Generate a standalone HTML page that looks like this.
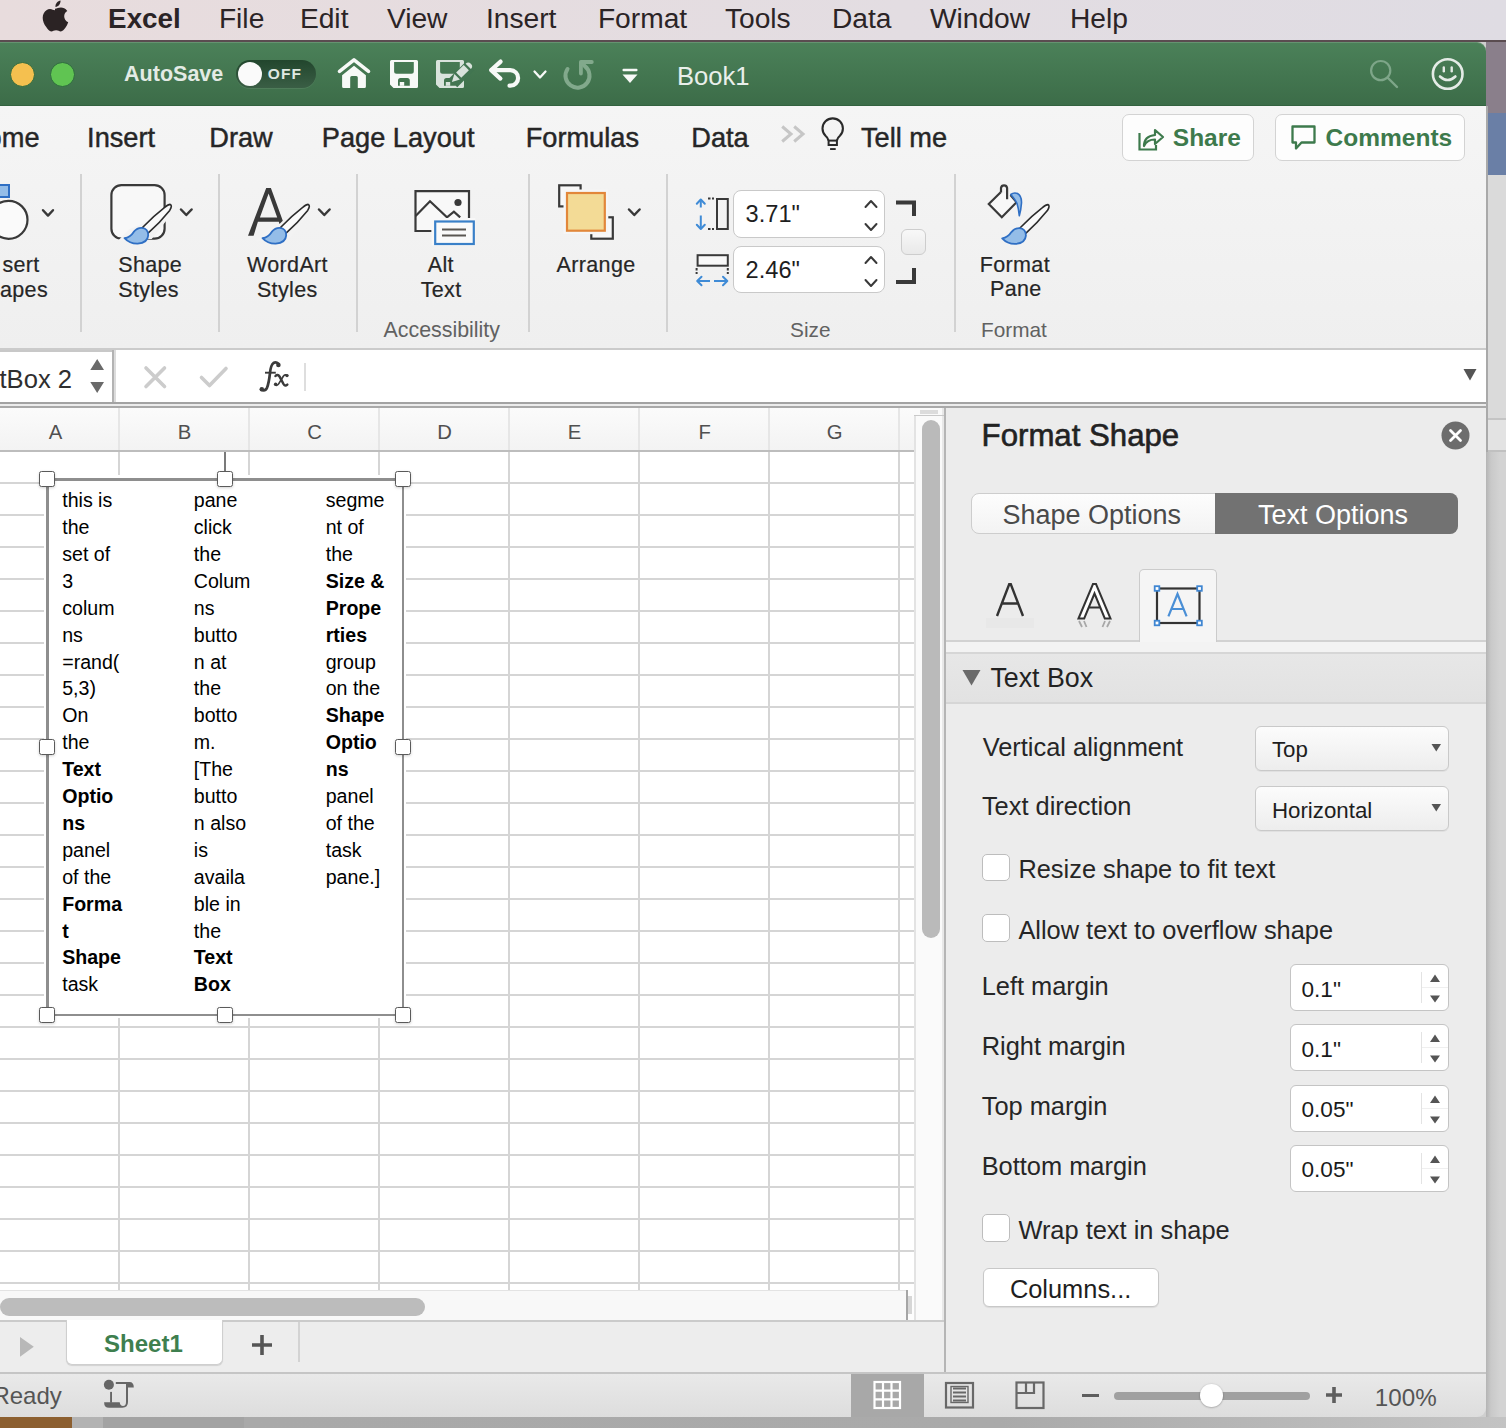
<!DOCTYPE html><html><head><meta charset="utf-8"><style>
html,body{margin:0;padding:0}
body{width:1506px;height:1428px;overflow:hidden;position:relative;background:#cfcfcf;font-family:"Liberation Sans",sans-serif}
.t{position:absolute;line-height:1;white-space:nowrap}
.r{position:absolute;box-sizing:border-box}
</style></head><body>

<div class="r" style="left:1486px;top:40px;width:20px;height:73px;background:#8a7f8b"></div>
<div class="r" style="left:1486px;top:113px;width:20px;height:62px;background:#6a7fa6"></div>
<div class="r" style="left:1486px;top:175px;width:20px;height:243px;background:#dadada"></div>
<div class="r" style="left:1486px;top:418px;width:20px;height:1.5px;background:#c4c4c4"></div>
<div class="r" style="left:1486px;top:419.5px;width:20px;height:30.5px;background:#e3e3e3"></div>
<div class="r" style="left:1486px;top:450px;width:20px;height:1.5px;background:#c0c0c0"></div>
<div class="r" style="left:1486px;top:451.5px;width:20px;height:976.5px;background:linear-gradient(90deg,#b4b4b4,#c9c9c9 5px,#d3d3d3 14px)"></div>
<div class="r" style="left:1486px;top:106px;width:1.5px;height:345.5px;background:#a9a9a9"></div>
<div class="r" style="left:0px;top:1417px;width:72px;height:11px;background:#8c5f30"></div>
<div class="r" style="left:72px;top:1417px;width:31px;height:11px;background:#b3b3b3"></div>
<div class="r" style="left:103px;top:1417px;width:141px;height:11px;background:#a3a3a3"></div>
<div class="r" style="left:244px;top:1417px;width:1262px;height:11px;background:linear-gradient(90deg,#a9a9a9,#aaaaaa 60%,#c3c3c3)"></div>
<div class="r" style="left:0px;top:0px;width:1506px;height:40px;background:linear-gradient(90deg,#e8dcdd,#e3dde2 60%,#dfdce3)"></div>
<div class="r" style="left:0px;top:40px;width:1506px;height:2px;background:#5a4c50"></div>
<svg class="r" style="left:42px;top:0px" width="27" height="32" viewBox="0 0 27 32"><path fill="#2b2324" d="M18.5 0.5c0.3 3-1.8 6.2-5 6.6-0.4-3.1 2-6.1 5-6.6z M13 8.8c2 0 3.3-1.2 6-1.2 1.9 0 4.6 0.9 6.3 3.4-4.6 2.6-3.9 9.4 0.9 11.2-0.7 2.1-1.6 3.8-2.8 5.6-1.3 1.8-2.8 3.6-4.6 3.6-1.9 0-2.4-1.1-4.7-1.1-2.4 0-3 1.1-4.8 1.1-2.1 0-3.6-2.3-4.9-4.2C0.6 22.6-0.3 16.9 1.8 13.2 3.2 10.7 5.4 9 8 9c2.2 0 3.3 1.3 5 1.3" /></svg>
<div class="t" style="left:108.1px;top:4.7px;font-size:27.8px;color:#2b2426;font-weight:bold;">Excel</div>
<div class="t" style="left:218.9px;top:4.3px;font-size:28.2px;color:#2b2426;">File</div>
<div class="t" style="left:299.9px;top:4.3px;font-size:28.2px;color:#2b2426;">Edit</div>
<div class="t" style="left:386.9px;top:4.3px;font-size:28.2px;color:#2b2426;">View</div>
<div class="t" style="left:485.9px;top:4.3px;font-size:28.2px;color:#2b2426;">Insert</div>
<div class="t" style="left:597.9px;top:4.3px;font-size:28.2px;color:#2b2426;">Format</div>
<div class="t" style="left:724.9px;top:4.3px;font-size:28.2px;color:#2b2426;">Tools</div>
<div class="t" style="left:831.9px;top:4.3px;font-size:28.2px;color:#2b2426;">Data</div>
<div class="t" style="left:929.9px;top:4.3px;font-size:28.2px;color:#2b2426;">Window</div>
<div class="t" style="left:1069.9px;top:4.3px;font-size:28.2px;color:#2b2426;">Help</div>
<div class="r" style="left:0px;top:42px;width:1486px;height:64px;background:linear-gradient(#4b8159,#3c6c48);border-top-right-radius:9px;box-shadow:inset 0 1px 0 rgba(255,255,255,0.15), inset 0 -1px 0 #33623f"></div>
<div class="r" style="left:9.5px;top:61.5px;width:25.0px;height:25.0px;background:#f5c04f;border-radius:50%;border:1.5px solid #2f6a3f"></div>
<div class="r" style="left:49.5px;top:61.5px;width:25.0px;height:25.0px;background:#60c452;border-radius:50%;border:1.5px solid #2f6a3f"></div>
<div class="t" style="left:124.1px;top:64.2px;font-size:21.5px;color:#e3ebe5;font-weight:bold;">AutoSave</div>
<div class="r" style="left:236px;top:60px;width:80px;height:28px;background:linear-gradient(#22462d,#3a5e45);border-radius:14px;box-shadow:0 1px 0 rgba(255,255,255,0.08)"></div>
<div class="r" style="left:238px;top:62px;width:24px;height:24px;background:#fafafa;border-radius:50%"></div>
<div class="t" style="left:267.7px;top:65.7px;font-size:15.5px;color:#dfe8e1;font-weight:bold;letter-spacing:1.2px">OFF</div>
<svg class="r" style="left:334px;top:54px" width="40" height="40" viewBox="0 0 40 40"><path d="M5.5 17.3 L20 5.9 L34.5 17.3" fill="none" stroke="#f7f9f7" stroke-width="3.6" stroke-linecap="round" stroke-linejoin="round"/><path d="M8.1 21.3 L20 11.8 L31.9 21.3 V32.4 Q31.9 33.9 30.4 33.9 H23.8 V23.6 Q23.8 22.1 22.3 22.1 H17.7 Q16.2 22.1 16.2 23.6 V33.9 H9.6 Q8.1 33.9 8.1 32.4 Z" fill="#f7f9f7"/></svg>
<svg class="r" style="left:384px;top:54px" width="40" height="40" viewBox="0 0 40 40"><path fill="#f7f9f7" fill-rule="evenodd" d="M7.5 6 H32.5 Q34 6 34 7.5 V32.5 Q34 34 32.5 34 H9.5 L6 30.5 V7.5 Q6 6 7.5 6 Z M10.1 8.1 V17.2 Q10.1 19.7 12.6 19.7 H27.3 Q29.8 19.7 29.8 17.2 V8.1 Z M14 31.8 V26.6 Q14 24.1 16.5 24.1 H23.3 Q25.8 24.1 25.8 26.6 V31.8 Z"/><rect x="15.8" y="28" width="4.4" height="3.8" fill="#f7f9f7"/></svg>
<svg class="r" style="left:430px;top:54px" width="46" height="40" viewBox="0 0 46 40"><path fill="#d9e3dc" fill-rule="evenodd" d="M7.5 6 H32.5 Q34 6 34 7.5 V32.5 Q34 34 32.5 34 H9.5 L6 30.5 V7.5 Q6 6 7.5 6 Z M10.1 8.1 V17.2 Q10.1 19.7 12.6 19.7 H27.3 Q29.8 19.7 29.8 17.2 V8.1 Z M14 31.8 V26.6 Q14 24.1 16.5 24.1 H23.3 Q25.8 24.1 25.8 26.6 V31.8 Z"/><rect x="15.8" y="28" width="4.4" height="3.8" fill="#d9e3dc"/><path d="M23 29 L40 12" stroke="#427551" stroke-width="12" stroke-linecap="butt"/><path d="M28.7 21.2 L36.3 13.6" stroke="#d9e3dc" stroke-width="7.3"/><path d="M24.4 19.9 L29.9 25.6 L21.9 27.9 Z" fill="#d9e3dc"/><path d="M35.6 9.8 A3.7 3.7 0 0 1 40.9 15 Z" fill="#d9e3dc"/></svg>
<svg class="r" style="left:484px;top:54px" width="40" height="40" viewBox="0 0 40 40"><path d="M16.6 7.6 L7.2 16.1 L16.4 24.6" fill="none" stroke="#f7f9f7" stroke-width="4.2" stroke-linecap="round" stroke-linejoin="round"/><path d="M7.5 16.1 H26.3 A7.8 7.8 0 0 1 26.3 31.7 H25.5" fill="none" stroke="#f7f9f7" stroke-width="4.2" stroke-linecap="round"/></svg>
<svg class="r" style="left:532px;top:68px" width="16" height="14" viewBox="0 0 16 14"><path d="M2.5 3.5 L8 9.5 L13.5 3.5" fill="none" stroke="#f7f9f7" stroke-width="2.3" stroke-linecap="round" stroke-linejoin="round"/></svg>
<svg class="r" style="left:555px;top:52px" width="50" height="44" viewBox="0 0 50 44"><path d="M12.5 17 A12 12 0 1 0 29.8 14.1 L26.5 10.5" fill="none" stroke="#82a98c" stroke-width="4" stroke-linecap="round" stroke-linejoin="round"/><path d="M25.9 21.5 V10 H36.8" fill="none" stroke="#82a98c" stroke-width="3.8" stroke-linecap="round" stroke-linejoin="round"/></svg>
<svg class="r" style="left:621px;top:67px" width="18" height="18" viewBox="0 0 18 18"><rect x="1.5" y="1.8" width="15" height="2.4" fill="#f7f9f7" rx="1"/><path d="M1.5 7.5 H16.5 L9 16 Z" fill="#f7f9f7"/></svg>
<div class="t" style="left:677.0px;top:63.9px;font-size:25.6px;color:#e9efea;">Book1</div>
<svg class="r" style="left:1366px;top:56px" width="36" height="36" viewBox="0 0 36 36"><circle cx="14.7" cy="14.6" r="9.6" fill="none" stroke="#7ea689" stroke-width="2.2"/><path d="M21.5 21.5 L31 31" stroke="#7ea689" stroke-width="2.4" stroke-linecap="round"/></svg>
<svg class="r" style="left:1428px;top:54px" width="40" height="40" viewBox="0 0 40 40"><circle cx="19.7" cy="20" r="14.8" fill="none" stroke="#e4ebe6" stroke-width="2.6"/><rect x="14.6" y="12.2" width="2.4" height="6.2" rx="1.2" fill="#e4ebe6"/><rect x="22.5" y="12.2" width="2.4" height="6.2" rx="1.2" fill="#e4ebe6"/><path d="M12 22.5 Q19.7 29.5 27.4 22.5" fill="none" stroke="#e4ebe6" stroke-width="2.6" stroke-linecap="round"/></svg>
<div class="r" style="left:0px;top:106px;width:1486px;height:242px;background:linear-gradient(#f5f5f5,#efefef)"></div>
<div class="r" style="left:0px;top:348px;width:1486px;height:2px;background:#cbcbcb"></div>
<div class="t" style="left:-13.4px;top:123.6px;font-size:27.2px;color:#262626;-webkit-text-stroke:0.45px #262626">ome</div>
<div class="t" style="left:87.1px;top:123.6px;font-size:27.2px;color:#262626;-webkit-text-stroke:0.45px #262626">Insert</div>
<div class="t" style="left:209.3px;top:123.6px;font-size:27.2px;color:#262626;-webkit-text-stroke:0.45px #262626">Draw</div>
<div class="t" style="left:321.8px;top:123.6px;font-size:27.2px;color:#262626;-webkit-text-stroke:0.45px #262626">Page Layout</div>
<div class="t" style="left:525.7px;top:123.6px;font-size:27.2px;color:#262626;-webkit-text-stroke:0.45px #262626">Formulas</div>
<div class="t" style="left:691.3px;top:123.6px;font-size:27.2px;color:#262626;-webkit-text-stroke:0.45px #262626">Data</div>
<div class="t" style="left:861.0px;top:123.6px;font-size:27.2px;color:#262626;-webkit-text-stroke:0.45px #262626">Tell me</div>
<svg class="r" style="left:779px;top:124px" width="28" height="22" viewBox="0 0 28 22"><path d="M3.2 2.5 L12 10 L3.2 17.5 M15.2 2.5 L24 10 L15.2 17.5" fill="none" stroke="#c6c6c6" stroke-width="3"/></svg>
<svg class="r" style="left:819px;top:117px" width="28" height="36" viewBox="0 0 28 36"><path d="M9.5 23.5 Q9 20.8 6.5 18.8 A10.2 10.2 0 1 1 20.9 18.8 Q18.4 20.8 17.9 23.5" fill="none" stroke="#2a2a2a" stroke-width="2.1"/><rect x="9.6" y="23.6" width="8.3" height="4.4" fill="none" stroke="#2a2a2a" stroke-width="2"/><rect x="11.1" y="31.1" width="5.6" height="1.9" fill="#2a2a2a"/></svg>
<div class="r" style="left:1121.5px;top:114.2px;width:132.20000000000005px;height:47.2px;background:#fdfdfd;border:1.5px solid #d3d3d3;border-radius:7px"></div>
<div class="r" style="left:1274.7px;top:114.2px;width:190.5999999999999px;height:47.2px;background:#fdfdfd;border:1.5px solid #d3d3d3;border-radius:7px"></div>
<svg class="r" style="left:1136px;top:124px" width="30" height="28" viewBox="0 0 30 28"><path d="M3.5 9 V25.5 H20 V21" fill="none" stroke="#3d7a4c" stroke-width="2.2"/><path d="M8 22 Q8 12 19 11 V6 L27 13 L19 20 V15.5 Q11 15.5 8 22 Z" fill="none" stroke="#3d7a4c" stroke-width="2.2" stroke-linejoin="round"/></svg>
<svg class="r" style="left:1290px;top:124px" width="30" height="28" viewBox="0 0 30 28"><path d="M2.5 2.5 H24.5 V18.5 H11.5 L6 24.5 V18.5 H2.5 Z" fill="none" stroke="#3d7a4c" stroke-width="2.3" stroke-linejoin="round"/></svg>
<div class="t" style="left:1172.8px;top:125.5px;font-size:24.5px;color:#3d7a4c;font-weight:bold;">Share</div>
<div class="t" style="left:1325.6px;top:125.5px;font-size:24.5px;color:#3d7a4c;font-weight:bold;">Comments</div>
<div class="r" style="left:80px;top:174px;width:2px;height:158px;background:#d2d2d2"></div>
<div class="r" style="left:218px;top:174px;width:2px;height:158px;background:#d2d2d2"></div>
<div class="r" style="left:356px;top:174px;width:2px;height:158px;background:#d2d2d2"></div>
<div class="r" style="left:528px;top:174px;width:2px;height:158px;background:#d2d2d2"></div>
<div class="r" style="left:666px;top:174px;width:2px;height:158px;background:#d2d2d2"></div>
<div class="r" style="left:954px;top:174px;width:2px;height:158px;background:#d2d2d2"></div>
<svg class="r" style="left:0px;top:180px" width="60" height="62" viewBox="0 0 60 62"><rect x="-4" y="5" width="13" height="12" fill="#94bde8" stroke="#2f6fc4" stroke-width="2"/><circle cx="8.5" cy="39.8" r="19" fill="#fafafa" stroke="#393939" stroke-width="2.2"/><path d="M43 30.2 L48 35.6 L53 30.2" fill="none" stroke="#393939" stroke-width="2.4" stroke-linecap="round" stroke-linejoin="round"/></svg>
<div class="t" style="left:2.4px;top:255.4px;font-size:21.5px;color:#262626;letter-spacing:0.35px;-webkit-text-stroke:0.2px #262626">sert</div>
<div class="t" style="left:0.0px;top:280.0px;font-size:21.5px;color:#262626;letter-spacing:0.35px;-webkit-text-stroke:0.2px #262626">apes</div>
<svg class="r" style="left:100px;top:175px" width="100" height="75" viewBox="0 0 100 75"><rect x="11.4" y="10.1" width="53.2" height="53.6" rx="10" fill="#f8f8f8" stroke="#393939" stroke-width="2.2"/><path transform="translate(69.7,29.9)" d="M2 -3 L6 4 L-18 34 L-52 36 L-40 24 L-25 18 Z" fill="#f3f3f3"/><g transform="translate(69.7,29.9)"><path d="M0.5 -0.5 Q3 0.5 0 5.5 Q-10 18 -21.9 28.5 L-27.2 22.6 Q-16 11 -5 2.5 Q-1.5 -0.5 0.5 -0.5 Z" fill="#fafafa" stroke="#2b2b2b" stroke-width="1.6" stroke-linejoin="round"/><path d="M-45.2 33.3 Q-39.5 32.5 -36 27 Q-32.5 22.8 -28 23 Q-21.5 23.5 -21.5 30.5 Q-22 38 -32 38.8 Q-40 39 -45.2 33.3 Z" fill="#94bde8" stroke="#2f6fc4" stroke-width="1.8" stroke-linejoin="round"/></g><path d="M81 34.5 L86.3 40 L91.6 34.5" fill="none" stroke="#393939" stroke-width="2.5" stroke-linecap="round" stroke-linejoin="round"/></svg>
<div class="t" style="left:118.2px;top:255.4px;font-size:21.5px;color:#262626;letter-spacing:0.35px;-webkit-text-stroke:0.2px #262626">Shape</div>
<div class="t" style="left:118.2px;top:280.0px;font-size:21.5px;color:#262626;letter-spacing:0.35px;-webkit-text-stroke:0.2px #262626">Styles</div>
<svg class="r" style="left:240px;top:175px" width="100" height="75" viewBox="0 0 100 75"><path fill-rule="evenodd" fill="#393939" d="M8 60.8 L26.2 12.9 H30.9 L42.8 45.8 L39.5 49 L38.8 46.8 H17.9 L13.6 60.8 Z M19.9 42.5 H37.2 L28.6 18.6 Z"/><path transform="translate(67.7,29.9)" d="M2 -3 L6 4 L-18 34 L-52 36 L-40 24 L-25 18 Z" fill="#f3f3f3"/><g transform="translate(67.7,29.9)"><path d="M0.5 -0.5 Q3 0.5 0 5.5 Q-10 18 -21.9 28.5 L-27.2 22.6 Q-16 11 -5 2.5 Q-1.5 -0.5 0.5 -0.5 Z" fill="#fafafa" stroke="#2b2b2b" stroke-width="1.6" stroke-linejoin="round"/><path d="M-45.2 33.3 Q-39.5 32.5 -36 27 Q-32.5 22.8 -28 23 Q-21.5 23.5 -21.5 30.5 Q-22 38 -32 38.8 Q-40 39 -45.2 33.3 Z" fill="#94bde8" stroke="#2f6fc4" stroke-width="1.8" stroke-linejoin="round"/></g><path d="M79 34.5 L84.3 40 L89.6 34.5" fill="none" stroke="#393939" stroke-width="2.5" stroke-linecap="round" stroke-linejoin="round"/></svg>
<div class="t" style="left:247.0px;top:255.4px;font-size:21.5px;color:#262626;letter-spacing:0.35px;-webkit-text-stroke:0.2px #262626">WordArt</div>
<div class="t" style="left:256.9px;top:280.0px;font-size:21.5px;color:#262626;letter-spacing:0.35px;-webkit-text-stroke:0.2px #262626">Styles</div>
<svg class="r" style="left:410px;top:186px" width="68" height="62" viewBox="0 0 68 62"><path d="M21.5 45 H5.5 V5.2 H59 V32" fill="#f8f8f8" stroke="#393939" stroke-width="2.2"/><path d="M5.6 30.1 L20 15.3 L37 31.4 L43.9 25.6 L50.2 31.4" fill="none" stroke="#393939" stroke-width="2.2"/><circle cx="48" cy="16.5" r="3.6" fill="#393939"/><rect x="24.2" y="34.5" width="38.6" height="22.5" fill="#f8f8f8" stroke="#f8f8f8" stroke-width="5"/><rect x="25.2" y="35.5" width="38.6" height="22.5" fill="#fafafa" stroke="#3a80c8" stroke-width="2.2"/><path d="M32 43.5 H56 M32 49.5 H56" stroke="#5a5752" stroke-width="1.8"/></svg>
<div class="t" style="left:427.7px;top:255.4px;font-size:21.5px;color:#262626;letter-spacing:0.35px;-webkit-text-stroke:0.2px #262626">Alt</div>
<div class="t" style="left:420.7px;top:280.0px;font-size:21.5px;color:#262626;letter-spacing:0.35px;-webkit-text-stroke:0.2px #262626">Text</div>
<svg class="r" style="left:550px;top:178px" width="100" height="70" viewBox="0 0 100 70"><rect x="9.2" y="7.3" width="21.4" height="21.1" fill="#f8f8f8" stroke="#393939" stroke-width="2.2"/><rect x="41.3" y="39.3" width="21.5" height="21.4" fill="#f8f8f8" stroke="#393939" stroke-width="2.2"/><rect x="13.5" y="11.5" width="44.8" height="44.7" fill="#f6f6f6"/><rect x="17" y="15" width="37.8" height="37.7" fill="#f3db96" stroke="#e2873a" stroke-width="2.2"/><path d="M79 31.5 L84.3 37 L89.6 31.5" fill="none" stroke="#393939" stroke-width="2.5" stroke-linecap="round" stroke-linejoin="round"/></svg>
<div class="t" style="left:556.6px;top:255.4px;font-size:21.5px;color:#262626;letter-spacing:0.35px;-webkit-text-stroke:0.2px #262626">Arrange</div>
<div class="t" style="left:383.5px;top:319.8px;font-size:21.4px;color:#616161;">Accessibility</div>
<div class="t" style="left:790.1px;top:320.3px;font-size:20.8px;color:#616161;">Size</div>
<div class="t" style="left:981.0px;top:320.3px;font-size:20.8px;color:#616161;">Format</div>
<svg class="r" style="left:692px;top:194px" width="40" height="40" viewBox="0 0 40 40"><path d="M8.8 5.8 V13.5 M8.8 21.5 V34.7" stroke="#3f8bd6" stroke-width="2"/><path d="M4.8 9.8 L8.8 5.5 L12.8 9.8 M4.8 30.7 L8.8 35 L12.8 30.7" fill="none" stroke="#3f8bd6" stroke-width="2" stroke-linecap="round" stroke-linejoin="round"/><rect x="25" y="5" width="10.8" height="30" fill="none" stroke="#393939" stroke-width="2"/><path d="M16 4.6 H22 M16 35 H22" stroke="#393939" stroke-width="2" stroke-dasharray="2.5 1.5"/></svg>
<svg class="r" style="left:692px;top:250px" width="40" height="40" viewBox="0 0 40 40"><rect x="5.6" y="5.2" width="30.2" height="10.5" fill="#f8f8f8" stroke="#393939" stroke-width="2"/><path d="M4.6 18 V24 M35.8 18 V24" stroke="#393939" stroke-width="2" stroke-dasharray="2.5 1.5"/><path d="M5.5 31 H18 M22 31 H35" stroke="#3f8bd6" stroke-width="2"/><path d="M9.5 26.8 L5.2 31 L9.5 35.2 M31 26.8 L35.3 31 L31 35.2" fill="none" stroke="#3f8bd6" stroke-width="2" stroke-linecap="round" stroke-linejoin="round"/></svg>
<div class="r" style="left:732.6px;top:190.2px;width:152.69999999999993px;height:47.60000000000002px;background:#fff;border:1.5px solid #c9c9c9;border-radius:8px"></div>
<div class="r" style="left:732.6px;top:246.4px;width:152.69999999999993px;height:47.099999999999994px;background:#fff;border:1.5px solid #c9c9c9;border-radius:8px"></div>
<div class="t" style="left:745.6px;top:203.4px;font-size:23.6px;color:#1e1e1e;">3.71"</div>
<div class="t" style="left:745.6px;top:259.2px;font-size:23.6px;color:#1e1e1e;">2.46"</div>
<svg class="r" style="left:862px;top:194px" width="18" height="42" viewBox="0 0 18 42"><path d="M3.5 13 L9 7 L14.5 13 M3.5 30 L9 36 L14.5 30" fill="none" stroke="#393939" stroke-width="2" stroke-linecap="round" stroke-linejoin="round"/></svg>
<svg class="r" style="left:862px;top:250px" width="18" height="42" viewBox="0 0 18 42"><path d="M3.5 13 L9 7 L14.5 13 M3.5 30 L9 36 L14.5 30" fill="none" stroke="#393939" stroke-width="2" stroke-linecap="round" stroke-linejoin="round"/></svg>
<svg class="r" style="left:893px;top:197px" width="28" height="92" viewBox="0 0 28 92"><path d="M3 5.5 H21 V19" fill="none" stroke="#393939" stroke-width="4"/><path d="M3 85 H21 V71" fill="none" stroke="#393939" stroke-width="4"/></svg>
<div class="r" style="left:901.4px;top:229px;width:25.100000000000023px;height:26px;background:linear-gradient(#f8f8f8,#e9e9e9);border:1px solid #cdcdcd;border-radius:6px"></div>
<svg class="r" style="left:980px;top:178px" width="80" height="72" viewBox="0 0 80 72"><path d="M20.7 14.3 L8.8 26 L21.8 39.3 L36.6 24.2 L30.5 17" fill="#f8f8f8" stroke="#393939" stroke-width="2.2" stroke-linejoin="miter"/><path d="M21 14.5 V10 A3.1 3.1 0 0 1 27.1 10 V21.2" fill="none" stroke="#393939" stroke-width="2.2"/><path d="M30.8 16.5 Q34 14 37.5 15.5 Q41.8 18 41.5 25 Q41 32 39.3 37.7 Q38.5 30 37 25.5 Q35.5 22 30.8 16.5 Z" fill="#94bde8" stroke="#2f6fc4" stroke-width="1.6" stroke-linejoin="round"/><g transform="translate(67.4,27.1)"><path d="M0.5 -0.5 Q3 0.5 0 5.5 Q-10 18 -21.9 28.5 L-27.2 22.6 Q-16 11 -5 2.5 Q-1.5 -0.5 0.5 -0.5 Z" fill="#fafafa" stroke="#2b2b2b" stroke-width="1.6" stroke-linejoin="round"/><path d="M-45.2 33.3 Q-39.5 32.5 -36 27 Q-32.5 22.8 -28 23 Q-21.5 23.5 -21.5 30.5 Q-22 38 -32 38.8 Q-40 39 -45.2 33.3 Z" fill="#94bde8" stroke="#2f6fc4" stroke-width="1.8" stroke-linejoin="round"/></g></svg>
<div class="t" style="left:979.8px;top:254.5px;font-size:21.5px;color:#262626;letter-spacing:0.35px;-webkit-text-stroke:0.2px #262626">Format</div>
<div class="t" style="left:990.0px;top:279.0px;font-size:21.5px;color:#262626;letter-spacing:0.35px;-webkit-text-stroke:0.2px #262626">Pane</div>
<div class="r" style="left:0px;top:350px;width:1486px;height:52px;background:#ffffff"></div>
<div class="r" style="left:0px;top:350px;width:113px;height:2px;background:#c8c8c8"></div>
<div class="r" style="left:112px;top:350px;width:2px;height:52px;background:#b3b3b3"></div>
<div class="r" style="left:114px;top:350px;width:2px;height:52px;background:#dcdcdc"></div>
<div class="r" style="left:0px;top:402px;width:1486px;height:1.5px;background:#a3a3a3"></div>
<div class="r" style="left:0px;top:403.5px;width:1486px;height:2.5px;background:#ececec"></div>
<div class="r" style="left:0px;top:406px;width:1486px;height:2px;background:#a9a9a9"></div>
<div class="t" style="left:-0.5px;top:366.6px;font-size:25.6px;color:#2f2f2f;">tBox 2</div>
<svg class="r" style="left:88px;top:356px" width="20" height="40" viewBox="0 0 20 40"><path d="M2.3 14 L9.2 3 L16 14 Z M2.3 26 L9.2 37 L16 26 Z" fill="#6a6a6a"/></svg>
<svg class="r" style="left:142px;top:364px" width="28" height="27" viewBox="0 0 28 27"><path d="M4 4 L22.5 22.5 M22.5 4 L4 22.5" stroke="#cccccc" stroke-width="3.6" stroke-linecap="round"/></svg>
<svg class="r" style="left:197px;top:364px" width="34" height="27" viewBox="0 0 34 27"><path d="M4.5 13.5 L12.5 21.5 L29 4.5" fill="none" stroke="#cccccc" stroke-width="3.6" stroke-linecap="round" stroke-linejoin="round"/></svg>
<svg class="r" style="left:240px;top:350px" width="60" height="50" viewBox="0 0 60 50"><g fill="none" stroke="#3b3b3b" stroke-linecap="round"><path d="M38.5 13.8 Q36 11.5 33.5 13 Q30.8 15 30 23 Q28.8 33.5 27 37.8 Q25.2 41.3 22 40" stroke-width="2.7"/><path d="M25 22.7 H35.8" stroke-width="1.9" stroke-linecap="butt"/><path d="M35.5 26 Q37.6 23.8 39.5 26.5 L43.5 34 Q45 36.6 47.3 34.6" stroke-width="2.5"/><path d="M47.2 25.4 Q45.3 23.8 43.3 26.3 L38.8 33.6 Q37 36.4 35 34.6" stroke-width="1.7"/></g><circle cx="38.4" cy="15" r="2.3" fill="#3b3b3b"/><circle cx="21.8" cy="39.3" r="2.3" fill="#3b3b3b"/><circle cx="47" cy="25.6" r="1.7" fill="#3b3b3b"/><circle cx="35.6" cy="34.2" r="1.7" fill="#3b3b3b"/></svg>
<div class="r" style="left:304px;top:362.6px;width:2px;height:28.899999999999977px;background:#dedede"></div>
<svg class="r" style="left:1461px;top:366px" width="18" height="18" viewBox="0 0 18 18"><path d="M2.5 3 H15.5 L9 14.5 Z" fill="#555"/></svg>
<div class="r" style="left:0px;top:408px;width:914px;height:42px;background:linear-gradient(#fbfbfb,#f3f3f3)"></div>
<div class="r" style="left:0px;top:450px;width:914px;height:2px;background:#bdbdbd"></div>
<div class="r" style="left:118px;top:408px;width:2px;height:42px;background:#e6e6e6"></div>
<div class="r" style="left:248px;top:408px;width:2px;height:42px;background:#e6e6e6"></div>
<div class="r" style="left:378px;top:408px;width:2px;height:42px;background:#e6e6e6"></div>
<div class="r" style="left:508px;top:408px;width:2px;height:42px;background:#e6e6e6"></div>
<div class="r" style="left:638px;top:408px;width:2px;height:42px;background:#e6e6e6"></div>
<div class="r" style="left:768px;top:408px;width:2px;height:42px;background:#e6e6e6"></div>
<div class="r" style="left:898px;top:408px;width:2px;height:42px;background:#e6e6e6"></div>
<div class="t" style="left:35.6px;width:40px;text-align:center;top:421.5px;font-size:20.3px;color:#505050">A</div>
<div class="t" style="left:164.6px;width:40px;text-align:center;top:421.5px;font-size:20.3px;color:#505050">B</div>
<div class="t" style="left:294.6px;width:40px;text-align:center;top:421.5px;font-size:20.3px;color:#505050">C</div>
<div class="t" style="left:424.6px;width:40px;text-align:center;top:421.5px;font-size:20.3px;color:#505050">D</div>
<div class="t" style="left:554.6px;width:40px;text-align:center;top:421.5px;font-size:20.3px;color:#505050">E</div>
<div class="t" style="left:684.6px;width:40px;text-align:center;top:421.5px;font-size:20.3px;color:#505050">F</div>
<div class="t" style="left:814.6px;width:40px;text-align:center;top:421.5px;font-size:20.3px;color:#505050">G</div>
<div class="r" style="left:0px;top:452px;width:914px;height:838px;background:#fff"></div>
<div class="r" style="left:118px;top:452px;width:2px;height:838px;background:#d5d5d5"></div>
<div class="r" style="left:248px;top:452px;width:2px;height:838px;background:#d5d5d5"></div>
<div class="r" style="left:378px;top:452px;width:2px;height:838px;background:#d5d5d5"></div>
<div class="r" style="left:508px;top:452px;width:2px;height:838px;background:#d5d5d5"></div>
<div class="r" style="left:638px;top:452px;width:2px;height:838px;background:#d5d5d5"></div>
<div class="r" style="left:768px;top:452px;width:2px;height:838px;background:#d5d5d5"></div>
<div class="r" style="left:898px;top:452px;width:2px;height:838px;background:#d5d5d5"></div>
<div class="r" style="left:0px;top:482px;width:914px;height:2px;background:#d5d5d5"></div>
<div class="r" style="left:0px;top:514px;width:914px;height:2px;background:#d5d5d5"></div>
<div class="r" style="left:0px;top:546px;width:914px;height:2px;background:#d5d5d5"></div>
<div class="r" style="left:0px;top:578px;width:914px;height:2px;background:#d5d5d5"></div>
<div class="r" style="left:0px;top:610px;width:914px;height:2px;background:#d5d5d5"></div>
<div class="r" style="left:0px;top:642px;width:914px;height:2px;background:#d5d5d5"></div>
<div class="r" style="left:0px;top:674px;width:914px;height:2px;background:#d5d5d5"></div>
<div class="r" style="left:0px;top:706px;width:914px;height:2px;background:#d5d5d5"></div>
<div class="r" style="left:0px;top:738px;width:914px;height:2px;background:#d5d5d5"></div>
<div class="r" style="left:0px;top:770px;width:914px;height:2px;background:#d5d5d5"></div>
<div class="r" style="left:0px;top:802px;width:914px;height:2px;background:#d5d5d5"></div>
<div class="r" style="left:0px;top:834px;width:914px;height:2px;background:#d5d5d5"></div>
<div class="r" style="left:0px;top:866px;width:914px;height:2px;background:#d5d5d5"></div>
<div class="r" style="left:0px;top:898px;width:914px;height:2px;background:#d5d5d5"></div>
<div class="r" style="left:0px;top:930px;width:914px;height:2px;background:#d5d5d5"></div>
<div class="r" style="left:0px;top:962px;width:914px;height:2px;background:#d5d5d5"></div>
<div class="r" style="left:0px;top:994px;width:914px;height:2px;background:#d5d5d5"></div>
<div class="r" style="left:0px;top:1026px;width:914px;height:2px;background:#d5d5d5"></div>
<div class="r" style="left:0px;top:1058px;width:914px;height:2px;background:#d5d5d5"></div>
<div class="r" style="left:0px;top:1090px;width:914px;height:2px;background:#d5d5d5"></div>
<div class="r" style="left:0px;top:1122px;width:914px;height:2px;background:#d5d5d5"></div>
<div class="r" style="left:0px;top:1154px;width:914px;height:2px;background:#d5d5d5"></div>
<div class="r" style="left:0px;top:1186px;width:914px;height:2px;background:#d5d5d5"></div>
<div class="r" style="left:0px;top:1218px;width:914px;height:2px;background:#d5d5d5"></div>
<div class="r" style="left:0px;top:1250px;width:914px;height:2px;background:#d5d5d5"></div>
<div class="r" style="left:0px;top:1282px;width:914px;height:2px;background:#d5d5d5"></div>
<div class="r" style="left:914px;top:408px;width:30px;height:912px;background:#fafafa"></div>
<div class="r" style="left:914px;top:416px;width:2px;height:904px;background:#e3e3e3"></div>
<div class="r" style="left:942px;top:408px;width:2px;height:912px;background:#e8e8e8"></div>
<div class="r" style="left:920px;top:410px;width:18px;height:3.6000000000000227px;background:#dcdcdc"></div>
<div class="r" style="left:914px;top:415px;width:30px;height:1px;background:#c9c9c9"></div>
<div class="r" style="left:922px;top:420px;width:18px;height:518px;background:#bababa;border-radius:9px"></div>
<div class="r" style="left:907px;top:1290px;width:7px;height:30px;background:#fdfdfd"></div>
<div class="r" style="left:0px;top:1290px;width:907px;height:30px;background:#f8f8f8;border-top:1.5px solid #e3e3e3"></div>
<div class="r" style="left:906px;top:1290px;width:1.5px;height:30px;background:#a5a5a5"></div>
<div class="r" style="left:908px;top:1296px;width:4px;height:17.59999999999991px;background:#d6d6d6"></div>
<div class="r" style="left:0px;top:1298px;width:425px;height:18px;background:#bcbcbc;border-radius:9px"></div>
<div class="r" style="left:0px;top:1320px;width:944px;height:53px;background:#ededed"></div>
<div class="r" style="left:0px;top:1320px;width:944px;height:2px;background:#cbcbcb"></div>
<svg class="r" style="left:18px;top:1335px" width="18" height="24" viewBox="0 0 18 24"><path d="M2 2 L15.8 11.8 L2 21.7 Z" fill="#b8b8b8"/></svg>
<div class="r" style="left:65.6px;top:1320px;width:157.1px;height:45px;background:#fff;border:1.5px solid #cfcfcf;border-top:none;border-radius:0 0 6px 6px;box-shadow:0 1px 1px rgba(0,0,0,0.12)"></div>
<div class="t" style="left:104.1px;top:1332.3px;font-size:24px;color:#3e7f4f;font-weight:bold;">Sheet1</div>
<svg class="r" style="left:250px;top:1333px" width="24" height="24" viewBox="0 0 24 24"><path d="M12 2 V22 M2 12 H22" stroke="#555" stroke-width="3.6"/></svg>
<div class="r" style="left:298px;top:1322px;width:2px;height:40px;background:#d3d3d3"></div>
<div class="r" style="left:44px;top:475px;width:362px;height:543px;background:#fff"></div>
<div class="r" style="left:224px;top:452px;width:2px;height:27px;background:#7a7a7a"></div>
<div class="r" style="left:46px;top:478px;width:358px;height:538px;border:3px solid #8e8e8e;border-right-width:2px;border-bottom-width:2px"></div>
<div class="t" style="left:62.2px;top:491.1px;font-size:19.6px;color:#000;">this is</div>
<div class="t" style="left:62.2px;top:518.0px;font-size:19.6px;color:#000;">the</div>
<div class="t" style="left:62.2px;top:544.9px;font-size:19.6px;color:#000;">set of</div>
<div class="t" style="left:62.2px;top:571.8px;font-size:19.6px;color:#000;">3</div>
<div class="t" style="left:62.2px;top:598.7px;font-size:19.6px;color:#000;">colum</div>
<div class="t" style="left:62.2px;top:625.6px;font-size:19.6px;color:#000;">ns</div>
<div class="t" style="left:62.2px;top:652.5px;font-size:19.6px;color:#000;">=rand(</div>
<div class="t" style="left:62.2px;top:679.4px;font-size:19.6px;color:#000;">5,3)</div>
<div class="t" style="left:62.2px;top:706.3px;font-size:19.6px;color:#000;">On</div>
<div class="t" style="left:62.2px;top:733.2px;font-size:19.6px;color:#000;">the</div>
<div class="t" style="left:62.2px;top:760.1px;font-size:19.6px;color:#000;font-weight:bold;">Text</div>
<div class="t" style="left:62.2px;top:787.0px;font-size:19.6px;color:#000;font-weight:bold;">Optio</div>
<div class="t" style="left:62.2px;top:813.9px;font-size:19.6px;color:#000;font-weight:bold;">ns</div>
<div class="t" style="left:62.2px;top:840.8px;font-size:19.6px;color:#000;">panel</div>
<div class="t" style="left:62.2px;top:867.7px;font-size:19.6px;color:#000;">of the</div>
<div class="t" style="left:62.2px;top:894.6px;font-size:19.6px;color:#000;font-weight:bold;">Forma</div>
<div class="t" style="left:62.2px;top:921.5px;font-size:19.6px;color:#000;font-weight:bold;">t</div>
<div class="t" style="left:62.2px;top:948.4px;font-size:19.6px;color:#000;font-weight:bold;">Shape</div>
<div class="t" style="left:62.2px;top:975.3px;font-size:19.6px;color:#000;">task</div>
<div class="t" style="left:193.8px;top:491.1px;font-size:19.6px;color:#000;">pane</div>
<div class="t" style="left:193.8px;top:518.0px;font-size:19.6px;color:#000;">click</div>
<div class="t" style="left:193.8px;top:544.9px;font-size:19.6px;color:#000;">the</div>
<div class="t" style="left:193.8px;top:571.8px;font-size:19.6px;color:#000;">Colum</div>
<div class="t" style="left:193.8px;top:598.7px;font-size:19.6px;color:#000;">ns</div>
<div class="t" style="left:193.8px;top:625.6px;font-size:19.6px;color:#000;">butto</div>
<div class="t" style="left:193.8px;top:652.5px;font-size:19.6px;color:#000;">n at</div>
<div class="t" style="left:193.8px;top:679.4px;font-size:19.6px;color:#000;">the</div>
<div class="t" style="left:193.8px;top:706.3px;font-size:19.6px;color:#000;">botto</div>
<div class="t" style="left:193.8px;top:733.2px;font-size:19.6px;color:#000;">m.</div>
<div class="t" style="left:193.8px;top:760.1px;font-size:19.6px;color:#000;">[The</div>
<div class="t" style="left:193.8px;top:787.0px;font-size:19.6px;color:#000;">butto</div>
<div class="t" style="left:193.8px;top:813.9px;font-size:19.6px;color:#000;">n also</div>
<div class="t" style="left:193.8px;top:840.8px;font-size:19.6px;color:#000;">is</div>
<div class="t" style="left:193.8px;top:867.7px;font-size:19.6px;color:#000;">availa</div>
<div class="t" style="left:193.8px;top:894.6px;font-size:19.6px;color:#000;">ble in</div>
<div class="t" style="left:193.8px;top:921.5px;font-size:19.6px;color:#000;">the</div>
<div class="t" style="left:193.8px;top:948.4px;font-size:19.6px;color:#000;font-weight:bold;">Text</div>
<div class="t" style="left:193.8px;top:975.3px;font-size:19.6px;color:#000;font-weight:bold;">Box</div>
<div class="t" style="left:325.7px;top:491.1px;font-size:19.6px;color:#000;">segme</div>
<div class="t" style="left:325.7px;top:518.0px;font-size:19.6px;color:#000;">nt of</div>
<div class="t" style="left:325.7px;top:544.9px;font-size:19.6px;color:#000;">the</div>
<div class="t" style="left:325.7px;top:571.8px;font-size:19.6px;color:#000;font-weight:bold;">Size &amp;</div>
<div class="t" style="left:325.7px;top:598.7px;font-size:19.6px;color:#000;font-weight:bold;">Prope</div>
<div class="t" style="left:325.7px;top:625.6px;font-size:19.6px;color:#000;font-weight:bold;">rties</div>
<div class="t" style="left:325.7px;top:652.5px;font-size:19.6px;color:#000;">group</div>
<div class="t" style="left:325.7px;top:679.4px;font-size:19.6px;color:#000;">on the</div>
<div class="t" style="left:325.7px;top:706.3px;font-size:19.6px;color:#000;font-weight:bold;">Shape</div>
<div class="t" style="left:325.7px;top:733.2px;font-size:19.6px;color:#000;font-weight:bold;">Optio</div>
<div class="t" style="left:325.7px;top:760.1px;font-size:19.6px;color:#000;font-weight:bold;">ns</div>
<div class="t" style="left:325.7px;top:787.0px;font-size:19.6px;color:#000;">panel</div>
<div class="t" style="left:325.7px;top:813.9px;font-size:19.6px;color:#000;">of the</div>
<div class="t" style="left:325.7px;top:840.8px;font-size:19.6px;color:#000;">task</div>
<div class="t" style="left:325.7px;top:867.7px;font-size:19.6px;color:#000;">pane.]</div>
<div class="r" style="left:39px;top:471px;width:16px;height:16px;background:#fff;border:1.5px solid #5a5a5a;border-radius:2.5px;box-shadow:0 1px 3px rgba(0,0,0,0.18)"></div>
<div class="r" style="left:39px;top:739px;width:16px;height:16px;background:#fff;border:1.5px solid #5a5a5a;border-radius:2.5px;box-shadow:0 1px 3px rgba(0,0,0,0.18)"></div>
<div class="r" style="left:39px;top:1007px;width:16px;height:16px;background:#fff;border:1.5px solid #5a5a5a;border-radius:2.5px;box-shadow:0 1px 3px rgba(0,0,0,0.18)"></div>
<div class="r" style="left:217px;top:471px;width:16px;height:16px;background:#fff;border:1.5px solid #5a5a5a;border-radius:2.5px;box-shadow:0 1px 3px rgba(0,0,0,0.18)"></div>
<div class="r" style="left:217px;top:1007px;width:16px;height:16px;background:#fff;border:1.5px solid #5a5a5a;border-radius:2.5px;box-shadow:0 1px 3px rgba(0,0,0,0.18)"></div>
<div class="r" style="left:395px;top:471px;width:16px;height:16px;background:#fff;border:1.5px solid #5a5a5a;border-radius:2.5px;box-shadow:0 1px 3px rgba(0,0,0,0.18)"></div>
<div class="r" style="left:395px;top:739px;width:16px;height:16px;background:#fff;border:1.5px solid #5a5a5a;border-radius:2.5px;box-shadow:0 1px 3px rgba(0,0,0,0.18)"></div>
<div class="r" style="left:395px;top:1007px;width:16px;height:16px;background:#fff;border:1.5px solid #5a5a5a;border-radius:2.5px;box-shadow:0 1px 3px rgba(0,0,0,0.18)"></div>
<div class="r" style="left:944px;top:408px;width:542px;height:965px;background:#ececec"></div>
<div class="r" style="left:944px;top:408px;width:2px;height:965px;background:#b5b5b5"></div>
<div class="t" style="left:981.6px;top:419.8px;font-size:31.2px;color:#222;-webkit-text-stroke:0.6px #222">Format Shape</div>
<svg class="r" style="left:1441px;top:421px" width="29" height="29" viewBox="0 0 29 29"><circle cx="14.5" cy="14.5" r="14" fill="#6d6d6d"/><path d="M9.5 9.5 L19.5 19.5 M19.5 9.5 L9.5 19.5" stroke="#fff" stroke-width="2.8" stroke-linecap="round"/></svg>
<div class="r" style="left:970.8px;top:493.2px;width:487.10000000000014px;height:41.30000000000001px;background:linear-gradient(#fdfdfd,#f3f3f3);border:1px solid #cdcdcd;border-radius:8px"></div>
<div class="r" style="left:1215px;top:493.2px;width:242.9000000000001px;height:41.30000000000001px;background:#727272;border-radius:0 8px 8px 0"></div>
<div class="t" style="left:1002.5px;top:501.6px;font-size:27px;color:#4a4a4a;">Shape Options</div>
<div class="t" style="left:1257.9px;top:501.6px;font-size:27px;color:#ffffff;">Text Options</div>
<div class="r" style="left:946px;top:640px;width:540px;height:1.5px;background:#d2d2d2"></div>
<div class="r" style="left:1139px;top:569px;width:78px;height:73px;background:#f5f5f5;border:1.5px solid #cbcbcb;border-bottom:none;border-radius:5px 5px 0 0"></div>
<div class="r" style="left:946px;top:641.5px;width:540px;height:10.5px;background:#f3f3f3"></div>
<div class="r" style="left:946px;top:652px;width:540px;height:1.5px;background:#d6d6d6"></div>
<div class="r" style="left:946px;top:653.5px;width:540px;height:48.5px;background:linear-gradient(#e7e7e7,#e2e2e2)"></div>
<div class="r" style="left:946px;top:702px;width:540px;height:1.5px;background:#d6d6d6"></div>
<svg class="r" style="left:985px;top:578px" width="50" height="54" viewBox="0 0 50 54"><rect x="1" y="40" width="48" height="10" fill="#e8e8e8"/><path d="M12 38 L24.2 6.3 H25.8 L38 38 M16.8 25.5 H33.2" fill="none" stroke="#333" stroke-width="2.4"/></svg>
<svg class="r" style="left:1070px;top:578px" width="50" height="54" viewBox="0 0 50 54"><path d="M8.5 40.5 L23 6 H26 L40.5 40.5 H34.8 L24.5 15.5 L14.2 40.5 Z M18.8 29.5 H30.2" fill="#fff" stroke="#333" stroke-width="2"/><path d="M9 43 L12 49 M14 43 L16.5 49 M40 43 L37 49 M35 43 L32.5 49" stroke="#a8a8a8" stroke-width="1.8"/></svg>
<svg class="r" style="left:1150px;top:582px" width="56" height="48" viewBox="0 0 56 48"><rect x="7" y="6.5" width="42.5" height="34.5" fill="none" stroke="#333" stroke-width="2.2"/><path d="M18.4 34.4 L27.5 12 L36.6 34.4 M21.5 27 H33.5" fill="none" stroke="#4a8fd6" stroke-width="2.2"/><rect x="4.7" y="4.2" width="4.6" height="4.6" fill="#fff" stroke="#3f86d2" stroke-width="1.8"/><rect x="4.7" y="38.7" width="4.6" height="4.6" fill="#fff" stroke="#3f86d2" stroke-width="1.8"/><rect x="47.2" y="4.2" width="4.6" height="4.6" fill="#fff" stroke="#3f86d2" stroke-width="1.8"/><rect x="47.2" y="38.7" width="4.6" height="4.6" fill="#fff" stroke="#3f86d2" stroke-width="1.8"/></svg>
<svg class="r" style="left:961px;top:668px" width="22" height="20" viewBox="0 0 22 20"><path d="M1.5 2 H19.5 L10.5 17.5 Z" fill="#6a6a6a"/></svg>
<div class="t" style="left:990.4px;top:665.2px;font-size:26.8px;color:#222;">Text Box</div>
<div class="t" style="left:982.7px;top:734.5px;font-size:25.4px;color:#262626;">Vertical alignment</div>
<div class="t" style="left:981.9px;top:793.5px;font-size:25.4px;color:#262626;">Text direction</div>
<div class="r" style="left:1255px;top:725.6px;width:194.20000000000005px;height:45.0px;background:linear-gradient(#fcfcfc,#ededed);border:1px solid #c9c9c9;border-radius:6px;box-shadow:0 1px 0 rgba(0,0,0,0.05)"></div>
<div class="t" style="left:1271.9px;top:739.4px;font-size:22.3px;color:#1e1e1e;">Top</div>
<svg class="r" style="left:1430px;top:741.6px" width="14" height="12" viewBox="0 0 14 12"><path d="M1.5 2 H11 L6.25 9.5 Z" fill="#555"/></svg>
<div class="r" style="left:1255px;top:785.7px;width:194.20000000000005px;height:45.09999999999991px;background:linear-gradient(#fcfcfc,#ededed);border:1px solid #c9c9c9;border-radius:6px;box-shadow:0 1px 0 rgba(0,0,0,0.05)"></div>
<div class="t" style="left:1271.9px;top:799.5px;font-size:22.3px;color:#1e1e1e;">Horizontal</div>
<svg class="r" style="left:1430px;top:801.7px" width="14" height="12" viewBox="0 0 14 12"><path d="M1.5 2 H11 L6.25 9.5 Z" fill="#555"/></svg>
<div class="r" style="left:982px;top:854px;width:27.5px;height:27.399999999999977px;background:#fff;border:1px solid #bdbdbd;border-radius:5px"></div>
<div class="t" style="left:1018.4px;top:857.4px;font-size:25.4px;color:#262626;">Resize shape to fit text</div>
<div class="r" style="left:982px;top:914.2px;width:27.5px;height:27.399999999999977px;background:#fff;border:1px solid #bdbdbd;border-radius:5px"></div>
<div class="t" style="left:1018.4px;top:917.6px;font-size:25.4px;color:#262626;">Allow text to overflow shape</div>
<div class="r" style="left:982px;top:1214.2px;width:27.5px;height:27.40000000000009px;background:#fff;border:1px solid #bdbdbd;border-radius:5px"></div>
<div class="t" style="left:1018.4px;top:1217.6px;font-size:25.4px;color:#262626;">Wrap text in shape</div>
<div class="t" style="left:981.7px;top:973.9px;font-size:25.4px;color:#262626;">Left margin</div>
<div class="r" style="left:1290.2px;top:964.2px;width:159.0px;height:47.0px;background:#fff;border:1px solid #c4c4c4;border-radius:6px"></div>
<div class="r" style="left:1420.5px;top:972.2px;width:1.0px;height:31.0px;background:#e3e3e3"></div>
<div class="r" style="left:1421.5px;top:987.2px;width:26.5px;height:1.0px;background:#efefef"></div>
<div class="t" style="left:1301.5px;top:978.9px;font-size:22.6px;color:#1a1a1a;">0.1"</div>
<svg class="r" style="left:1427px;top:971.2px" width="16" height="34" viewBox="0 0 16 34"><path d="M3 11 L8 3.5 L13 11 Z M3 24.5 L8 31.5 L13 24.5 Z" fill="#555"/></svg>
<div class="t" style="left:981.7px;top:1034.1px;font-size:25.4px;color:#262626;">Right margin</div>
<div class="r" style="left:1290.2px;top:1024.4px;width:159.0px;height:47.0px;background:#fff;border:1px solid #c4c4c4;border-radius:6px"></div>
<div class="r" style="left:1420.5px;top:1032.4px;width:1.0px;height:31.0px;background:#e3e3e3"></div>
<div class="r" style="left:1421.5px;top:1047.4px;width:26.5px;height:1.0px;background:#efefef"></div>
<div class="t" style="left:1301.5px;top:1039.1px;font-size:22.6px;color:#1a1a1a;">0.1"</div>
<svg class="r" style="left:1427px;top:1031.4px" width="16" height="34" viewBox="0 0 16 34"><path d="M3 11 L8 3.5 L13 11 Z M3 24.5 L8 31.5 L13 24.5 Z" fill="#555"/></svg>
<div class="t" style="left:981.7px;top:1094.3px;font-size:25.4px;color:#262626;">Top margin</div>
<div class="r" style="left:1290.2px;top:1084.6px;width:159.0px;height:47.0px;background:#fff;border:1px solid #c4c4c4;border-radius:6px"></div>
<div class="r" style="left:1420.5px;top:1092.6px;width:1.0px;height:31.0px;background:#e3e3e3"></div>
<div class="r" style="left:1421.5px;top:1107.6px;width:26.5px;height:1.0px;background:#efefef"></div>
<div class="t" style="left:1301.5px;top:1099.3px;font-size:22.6px;color:#1a1a1a;">0.05"</div>
<svg class="r" style="left:1427px;top:1091.6px" width="16" height="34" viewBox="0 0 16 34"><path d="M3 11 L8 3.5 L13 11 Z M3 24.5 L8 31.5 L13 24.5 Z" fill="#555"/></svg>
<div class="t" style="left:981.7px;top:1154.4px;font-size:25.4px;color:#262626;">Bottom margin</div>
<div class="r" style="left:1290.2px;top:1144.7px;width:159.0px;height:47.0px;background:#fff;border:1px solid #c4c4c4;border-radius:6px"></div>
<div class="r" style="left:1420.5px;top:1152.7px;width:1.0px;height:31.0px;background:#e3e3e3"></div>
<div class="r" style="left:1421.5px;top:1167.7px;width:26.5px;height:1.0px;background:#efefef"></div>
<div class="t" style="left:1301.5px;top:1159.4px;font-size:22.6px;color:#1a1a1a;">0.05"</div>
<svg class="r" style="left:1427px;top:1151.7px" width="16" height="34" viewBox="0 0 16 34"><path d="M3 11 L8 3.5 L13 11 Z M3 24.5 L8 31.5 L13 24.5 Z" fill="#555"/></svg>
<div class="r" style="left:983.2px;top:1268px;width:175.5px;height:39.40000000000009px;background:#fff;border:1px solid #c8c8c8;border-radius:6px;box-shadow:0 1px 1px rgba(0,0,0,0.08)"></div>
<div class="t" style="left:1009.9px;top:1276.5px;font-size:25.4px;color:#1e1e1e;">Columns...</div>
<div class="r" style="left:0px;top:1372px;width:1486px;height:2px;background:#c5c5c5"></div>
<div class="r" style="left:0px;top:1374px;width:1486px;height:43px;background:linear-gradient(#e9e9e9,#dddddd);border-bottom-right-radius:9px"></div>
<div class="t" style="right:1444.2px;top:1384.4px;font-size:24px;color:#555">Ready</div>
<svg class="r" style="left:95px;top:1374px" width="50" height="40" viewBox="0 0 50 40"><circle cx="13.9" cy="10.8" r="5" fill="#666"/><rect x="15.1" y="17.9" width="1.9" height="10.8" fill="#666"/><path d="M20.8 8.1 H34.5 Q38.8 8.1 38.8 13.6 H33 V10 H20.8 Z" fill="#666"/><path d="M31 10 H33 V28 Q33 33.7 27.5 33.7 H14 Q9.1 33.7 9.1 28.2 H24.7 Q25.2 32 28 32 Q31 32 31 28 Z" fill="#666"/></svg>
<div class="r" style="left:850.7px;top:1374px;width:73.5px;height:43px;background:#a8a8a8"></div>
<svg class="r" style="left:872px;top:1380px" width="30" height="30" viewBox="0 0 30 30"><rect x="2.5" y="2" width="25.5" height="26" fill="none" stroke="#fff" stroke-width="2.2"/><path d="M2.5 10.7 H28 M2.5 19.3 H28 M11 2 V28 M19.5 2 V28" stroke="#fff" stroke-width="2.2"/></svg>
<svg class="r" style="left:944px;top:1381px" width="32" height="29" viewBox="0 0 32 29"><rect x="2" y="2" width="27" height="24.5" fill="none" stroke="#686868" stroke-width="2.2"/><path d="M9 7.5 H22 M9 11.5 H22 M9 15.5 H22 M9 19.5 H22" stroke="#686868" stroke-width="1.8"/><rect x="7" y="5.5" width="17" height="16" fill="none" stroke="#686868" stroke-width="1.4"/></svg>
<svg class="r" style="left:1014px;top:1380px" width="32" height="30" viewBox="0 0 32 30"><rect x="2.5" y="2.5" width="27" height="25.5" fill="none" stroke="#686868" stroke-width="2.2"/><path d="M12 2.5 V13 H2.5 M12 13 H20 V2.5" fill="none" stroke="#686868" stroke-width="2.2"/></svg>
<div class="r" style="left:1081.7px;top:1393.8px;width:16.899999999999864px;height:3.6000000000001364px;background:#5e5e5e"></div>
<div class="r" style="left:1114px;top:1392px;width:196.20000000000005px;height:7.5px;background:#a0a0a0;border-radius:4px"></div>
<div class="r" style="left:1200px;top:1384.4px;width:22.59999999999991px;height:22.59999999999991px;background:#fff;border-radius:50%;box-shadow:0 0.5px 2px rgba(0,0,0,0.35)"></div>
<svg class="r" style="left:1324px;top:1385px" width="20" height="20" viewBox="0 0 20 20"><path d="M10 2 V18 M2 10 H18" stroke="#5e5e5e" stroke-width="3.6"/></svg>
<div class="t" style="left:1374.8px;top:1385.8px;font-size:24.2px;color:#555;">100%</div>
</body></html>
